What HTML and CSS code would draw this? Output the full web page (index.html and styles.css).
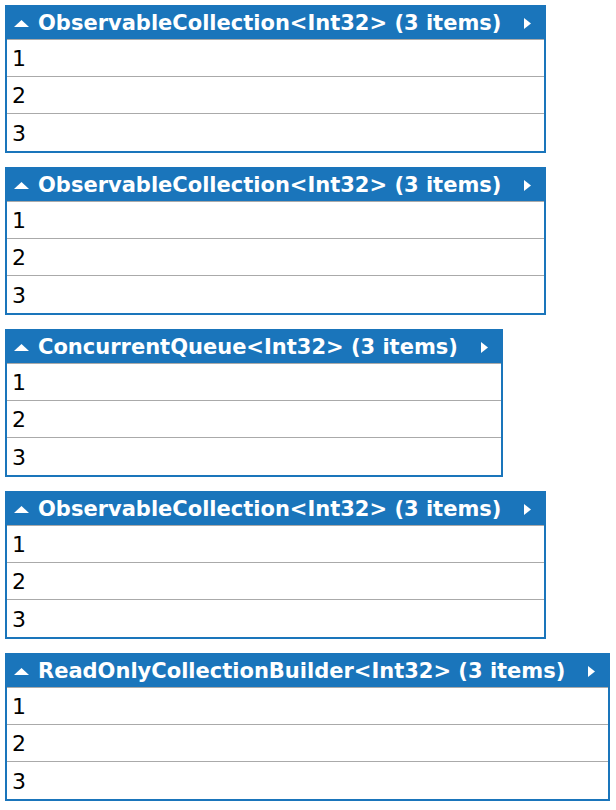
FILE: index.html
```html
<!DOCTYPE html>
<html>
<head>
<meta charset="utf-8">
<link rel="stylesheet" href="styles.css">
</head>
<body>
<div class="stack">
  <table class="coll">
    <thead><tr><th><div class="hdr"><svg class="up" width="15" height="7" viewBox="0 0 15 7"><polygon points="0,7 7.5,0 15,7" fill="#fff"/></svg><span class="title">ObservableCollection&lt;Int32&gt; (3 items)</span><svg class="right" width="7" height="11" viewBox="0 0 7 11"><polygon points="0,0 7,5.5 0,11" fill="#fff"/></svg></div></th></tr></thead>
    <tbody><tr><td>1</td></tr><tr><td>2</td></tr><tr><td>3</td></tr></tbody>
  </table>
  <table class="coll">
    <thead><tr><th><div class="hdr"><svg class="up" width="15" height="7" viewBox="0 0 15 7"><polygon points="0,7 7.5,0 15,7" fill="#fff"/></svg><span class="title">ObservableCollection&lt;Int32&gt; (3 items)</span><svg class="right" width="7" height="11" viewBox="0 0 7 11"><polygon points="0,0 7,5.5 0,11" fill="#fff"/></svg></div></th></tr></thead>
    <tbody><tr><td>1</td></tr><tr><td>2</td></tr><tr><td>3</td></tr></tbody>
  </table>
  <table class="coll">
    <thead><tr><th><div class="hdr"><svg class="up" width="15" height="7" viewBox="0 0 15 7"><polygon points="0,7 7.5,0 15,7" fill="#fff"/></svg><span class="title">ConcurrentQueue&lt;Int32&gt; (3 items)</span><svg class="right" width="7" height="11" viewBox="0 0 7 11"><polygon points="0,0 7,5.5 0,11" fill="#fff"/></svg></div></th></tr></thead>
    <tbody><tr><td>1</td></tr><tr><td>2</td></tr><tr><td>3</td></tr></tbody>
  </table>
  <table class="coll">
    <thead><tr><th><div class="hdr"><svg class="up" width="15" height="7" viewBox="0 0 15 7"><polygon points="0,7 7.5,0 15,7" fill="#fff"/></svg><span class="title">ObservableCollection&lt;Int32&gt; (3 items)</span><svg class="right" width="7" height="11" viewBox="0 0 7 11"><polygon points="0,0 7,5.5 0,11" fill="#fff"/></svg></div></th></tr></thead>
    <tbody><tr><td>1</td></tr><tr><td>2</td></tr><tr><td>3</td></tr></tbody>
  </table>
  <table class="coll">
    <thead><tr><th><div class="hdr"><svg class="up" width="15" height="7" viewBox="0 0 15 7"><polygon points="0,7 7.5,0 15,7" fill="#fff"/></svg><span class="title">ReadOnlyCollectionBuilder&lt;Int32&gt; (3 items)</span><svg class="right" width="7" height="11" viewBox="0 0 7 11"><polygon points="0,0 7,5.5 0,11" fill="#fff"/></svg></div></th></tr></thead>
    <tbody><tr><td>1</td></tr><tr><td>2</td></tr><tr><td>3</td></tr></tbody>
  </table>
</div>
</body>
</html>
```
FILE: styles.css
```css
html, body {
  margin: 0;
  padding: 0;
  background: #fff;
}
body {
  padding: 5px;
  font-family: "DejaVu Sans", Verdana, sans-serif;
}
.stack {
  display: flex;
  flex-direction: column;
  align-items: flex-start;
  gap: 14px;
}
.coll {
  border-collapse: separate;
  border-spacing: 0;
  border: 2px solid #1a75bb;
}
.coll th {
  background: #1a75bb;
  color: #fff;
  padding: 0;
  height: 32px;
  text-align: left;
}
.hdr {
  display: flex;
  align-items: center;
  padding: 0 13px 0 7px;
  height: 32px;
}
.up {
  margin-right: 9px;
  flex: none;
}
.title {
  font-weight: bold;
  font-size: 21px;
  white-space: nowrap;
}
.right {
  margin-left: 23px;
  flex: none;
}
.coll td {
  border-top: 1px solid #aaaaaa;
  height: 37px;
  padding: 1px 0 0 5px;
  font-size: 22px;
  color: #000;
  box-sizing: border-box;
}
.coll tr:last-child td {
  height: 38px;
}
```
